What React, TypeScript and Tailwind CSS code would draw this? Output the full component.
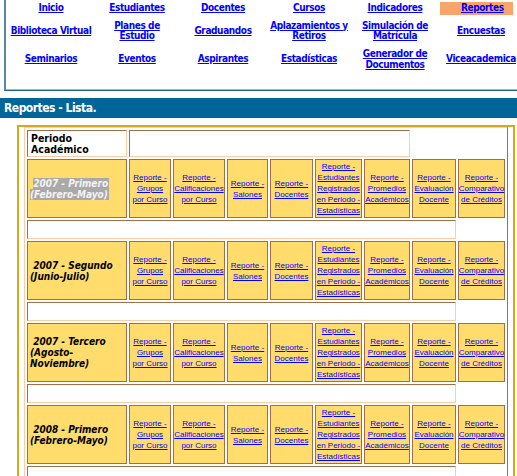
import React from 'react';

const tahoma = "font-['DejaVu_Sans_Condensed','DejaVu_Sans',sans-serif] [font-stretch:condensed]";
const arial = "font-['Liberation_Sans',Arial,sans-serif]";

const NAV: string[][][] = [
  [['Inicio'], ['Estudiantes'], ['Docentes'], ['Cursos'], ['Indicadores'], ['Reportes']],
  [['Biblioteca Virtual'], ['Planes de', 'Estudio'], ['Graduandos'], ['Aplazamientos y', 'Retiros'], ['Simulación de', 'Matrícula'], ['Encuestas']],
  [['Seminarios'], ['Eventos'], ['Aspirantes'], ['Estadísticas'], ['Generador de', 'Documentos'], ['Viceacademica']],
];

const PERIODS = [
  { lines: ['2007 - Primero', '(Febrero-Mayo)'], selected: true },
  { lines: ['2007 - Segundo', '(Junio-Julio)'] },
  { lines: ['2007 - Tercero', '(Agosto-', 'Noviembre)'] },
  { lines: ['2008 - Primero', '(Febrero-Mayo)'] },
];

const REPORTS = [
  ['Reporte -', 'Grupos', 'por Curso'],
  ['Reporte -', 'Calificaciones', 'por Curso'],
  ['Reporte -', 'Salones'],
  ['Reporte -', 'Docentes'],
  ['Reporte -', 'Estudiantes', 'Registrados', 'en Periodo -', 'Estadísticas'],
  ['Reporte -', 'Promedios', 'Académicos'],
  ['Reporte -', 'Evaluación', 'Docente'],
  ['Reporte -', 'Comparativo', 'de Créditos'],
];

function Lines({ lines }: { lines: string[] }) {
  return (
    <>
      {lines.map((l, i) => (
        <React.Fragment key={i}>
          {i > 0 && <br />}
          {l}
        </React.Fragment>
      ))}
    </>
  );
}

function NavLink({ lines }: { lines: string[] }) {
  return (
    <a href="#" className="text-[#0000ff] underline text-center">
      <Lines lines={lines} />
    </a>
  );
}

// inset cell: dark top/left, light bottom/right
const inset = 'border border-t-[#a36d45] border-l-[#a36d45] border-b-[#ffcaa6] border-r-[#ffcaa6] bg-white';
const yellow = 'border border-[#a36d45] bg-[#ffdc6c]';

export default function App() {
  return (
    <div className="w-[517px] h-[476px] overflow-hidden bg-white">
      {/* Top menu */}
      <div className={`ml-[4px] border-l-2 border-l-[#5a87a6] border-b border-b-[#22628c] shadow-[inset_0_-1px_0_#97bbd3] pl-[2px] pt-[2px] pb-[18px] ${tahoma}`}>
        <div className="grid grid-cols-[repeat(6,86px)] grid-rows-[13px_28px_25px] gap-y-[2px] text-[10px] font-bold leading-[10.5px] tracking-[-0.4px]">
          {NAV.flat().map((lines, i) =>
            lines[0] === 'Reportes' ? (
              <div key={i} className="flex items-center">
                <div className="ml-[2px] w-[73px] h-[13px] bg-[#f9a46a] flex items-center pl-[21px]">
                  <NavLink lines={lines} />
                </div>
              </div>
            ) : (
              <div key={i} className="flex items-center justify-center">
                <NavLink lines={lines} />
              </div>
            )
          )}
        </div>
      </div>

      {/* Title */}
      <div className={`mt-[7px] h-[20px] bg-[#006699] text-white font-bold text-[12px] tracking-[-0.5px] flex items-center pl-[4px] ${tahoma}`}>
        Reportes - Lista.
      </div>

      {/* Main box */}
      <div className="mt-[7px] ml-[17px] w-[498px] h-[400px] border-2 border-b-0 border-[#d6a91c] px-[5px]">
        <div className="w-[484px] border border-t-[#ffcaa6] border-l-[#ffcaa6] border-r-[#a36d45] border-b-[#a36d45] p-[2px]">
          <div className="grid grid-cols-[100px_42px_52px_41px_43px_47px_46px_44px_47px] gap-[2px]">
            <div className={`${inset} col-start-1 h-[27px] flex items-center pl-[3px] ${tahoma} font-bold text-[10.5px] leading-[11px] text-black`}>
              Periodo
              <br />
              Académico
            </div>
            <div className={`${inset} col-span-6 h-[27px]`} />

            {PERIODS.map((p, pi) => (
              <React.Fragment key={pi}>
                <div className={`${yellow} col-start-1 h-[59px] flex items-center pl-[2px] ${tahoma} font-bold italic text-[10px] leading-[11px] text-black`}>
                  <div>
                    {p.lines.map((l, i) => (
                      <React.Fragment key={i}>
                        {i > 0 && <br />}
                        {i === 0 && '\u00a0'}
                        {p.selected ? (
                          <span className="inline-block bg-[#a9a9a9] text-[#f4f4f4] leading-[11px] pr-[1px]">{l}</span>
                        ) : (
                          l
                        )}
                      </React.Fragment>
                    ))}
                  </div>
                </div>
                {REPORTS.map((r, ri) => (
                  <div key={ri} className={`${yellow} h-[59px] flex items-center justify-center ${arial} text-[8px] leading-[11px]`}>
                    <a href="#" className="text-[#0000ff] underline text-center whitespace-nowrap">
                      <Lines lines={r} />
                    </a>
                  </div>
                ))}
                <div className={`${inset} col-start-1 col-span-8 h-[19px]`} />
              </React.Fragment>
            ))}
          </div>
        </div>
      </div>
    </div>
  );
}
